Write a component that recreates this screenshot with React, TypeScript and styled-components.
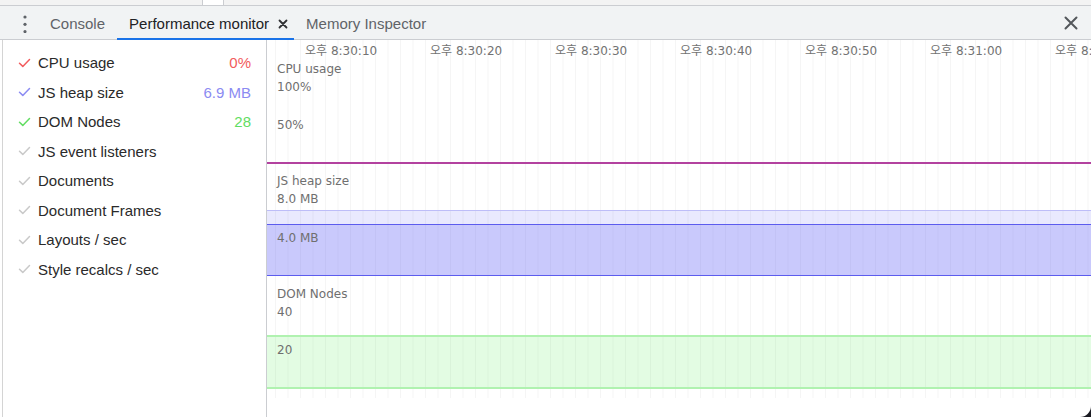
import React from 'react';
import styled, { createGlobalStyle } from 'styled-components';

const Global = createGlobalStyle`
  html, body { margin: 0; padding: 0; background: #1b1b22; }
  body { font-family: "Liberation Sans", Arial, sans-serif; }
`;

const Window = styled.div`
  width: 1091px;
  height: 417px;
  background: #fff;
  overflow: hidden;
  border-bottom-right-radius: 11px;
  display: flex;
  flex-direction: column;
`;

const TopStrip = styled.div`
  height: 5px;
  flex: none;
  background: #f3f3f3;
  border-bottom: 1px solid #cbcdd1;
  display: flex;
`;

const StripGap = styled.div`
  width: 202px;
`;

const StripCell = styled.div`
  width: 20px;
  background: #fff;
  border-left: 1px solid #cbcdd1;
  border-right: 1px solid #cbcdd1;
`;

const TabBar = styled.div`
  height: 33px;
  flex: none;
  background: #f1f3f4;
  border-bottom: 1px solid #cbcdd1;
  display: flex;
  align-items: stretch;
  padding: 0 13px 0 11px;
`;

const MenuButton = styled.div`
  width: 27px;
  display: flex;
  align-items: center;
  justify-content: center;
  color: #5f6368;
`;

const Tab = styled.div<{ $active?: boolean }>`
  display: flex;
  align-items: center;
  gap: 9px;
  padding: 1px ${p => (p.$active ? '6px' : '12px')} 0 12px;
  margin-bottom: -1px;
  font-size: 15px;
  white-space: nowrap;
  color: ${p => (p.$active ? '#202124' : '#5f6368')};
  box-shadow: ${p => (p.$active ? 'inset 0 -2px 0 #1a73e8' : 'none')};
`;

const Spacer = styled.div`
  flex: 1;
`;

const CloseButton = styled.div`
  display: flex;
  align-items: center;
  color: #5f6368;
`;

const Main = styled.div`
  flex: 1;
  display: flex;
  min-height: 0;
`;

const Sidebar = styled.div`
  width: 265px;
  margin-left: 2px;
  flex: none;
  box-sizing: border-box;
  border-left: 1px solid #d4d4d4;
  border-right: 1px solid #cbcdd1;
  padding-top: 8px;
  display: flex;
  flex-direction: column;
`;

const MetricRow = styled.div`
  height: 29.5px;
  display: flex;
  align-items: center;
  padding: 0 15px 0 15px;
  font-size: 15px;
  color: #2a2a2a;
`;

const Check = styled.svg<{ $color: string }>`
  width: 13px;
  height: 10px;
  flex: none;
  margin-right: 7px;
  stroke: ${p => p.$color};
`;

const MetricName = styled.span`
  flex: 1;
`;

const MetricValue = styled.span<{ $color: string }>`
  color: ${p => p.$color};
`;

const ChartArea = styled.div`
  flex: 1;
  min-width: 0;
  display: flex;
  flex-direction: column;
  font-family: "DejaVu Sans", "Noto Sans CJK KR", sans-serif;
  font-size: 12px;
  color: #6f6f6f;
`;

const Grid = styled.div`
  height: 358px;
  flex: none;
  display: flex;
  flex-direction: column;
  background-image: linear-gradient(to right, #f5f5f5 1px, transparent 1px);
  background-size: 12.5px 100%;
  background-position: 8px 0;
`;

const TimeAxis = styled.div`
  height: 17px;
  padding: 2px 0 0 38px;
  display: flex;
  white-space: nowrap;
  overflow: hidden;
  line-height: 18px;
  color: #727272;
`;

const TimeLabel = styled.span`
  width: 125px;
  flex: none;
`;

const Panel = styled.div<{ $pad: number }>`
  display: flex;
  flex-direction: column;
  padding-top: ${p => p.$pad}px;
`;

const Label = styled.div`
  height: 18px;
  line-height: 20px;
  padding-left: 10px;
  white-space: nowrap;
`;

const Gap = styled.div<{ $h: number }>`
  height: ${p => p.$h}px;
  flex: none;
`;

const Line = styled.div<{ $color: string; $w: number }>`
  height: ${p => p.$w}px;
  background: ${p => p.$color};
`;

const Band = styled.div<{ $fill: string; $h: number; $top?: string; $bottom?: string; $bw?: number }>`
  height: ${p => p.$h}px;
  box-sizing: border-box;
  background: ${p => p.$fill};
  border-top: ${p => (p.$top ? `${p.$bw ?? 1}px solid ${p.$top}` : 'none')};
  border-bottom: ${p => (p.$bottom ? `${p.$bw ?? 1}px solid ${p.$bottom}` : 'none')};
  padding-top: 3px;
`;

const CheckIcon = ({ color }: { color: string }) => (
  <Check $color={color} viewBox="0 0 13 10" fill="none" strokeWidth={1.5} strokeLinecap="round" strokeLinejoin="round">
    <path d="M1.5 5.2 L4.8 8.4 L11.5 1.5" />
  </Check>
);

const metrics = [
  { name: 'CPU usage', value: '0%', color: '#f25b5d', on: true },
  { name: 'JS heap size', value: '6.9 MB', color: '#8b8bf2', on: true },
  { name: 'DOM Nodes', value: '28', color: '#62dd62', on: true },
  { name: 'JS event listeners', on: false },
  { name: 'Documents', on: false },
  { name: 'Document Frames', on: false },
  { name: 'Layouts / sec', on: false },
  { name: 'Style recalcs / sec', on: false },
];

const times = ['8:30:10', '8:30:20', '8:30:30', '8:30:40', '8:30:50', '8:31:00', '8:31:10'];

export default function App() {
  return (
    <Window>
      <Global />
      <TopStrip>
        <StripGap />
        <StripCell />
      </TopStrip>
      <TabBar>
        <MenuButton>
          <svg width="6" height="20" viewBox="0 0 6 20" fill="currentColor">
            <circle cx="3" cy="4" r="1.6" />
            <circle cx="3" cy="11.3" r="1.6" />
            <circle cx="3" cy="18.6" r="1.6" />
          </svg>
        </MenuButton>
        <Tab>Console</Tab>
        <Tab $active>
          Performance monitor
          <svg width="10" height="10" viewBox="0 0 10 10" stroke="#303134" strokeWidth="1.8" strokeLinecap="round">
            <path d="M1.5 1.5 L8.5 8.5 M8.5 1.5 L1.5 8.5" />
          </svg>
        </Tab>
        <Tab>Memory Inspector</Tab>
        <Spacer />
        <CloseButton>
          <svg width="14" height="14" viewBox="0 0 14 14" stroke="#54575b" strokeWidth="2" strokeLinecap="round">
            <path d="M1.5 1.5 L12.5 12.5 M12.5 1.5 L1.5 12.5" />
          </svg>
        </CloseButton>
      </TabBar>
      <Main>
        <Sidebar>
          {metrics.map(m => (
            <MetricRow key={m.name}>
              <CheckIcon color={m.on ? (m.color as string) : '#c9c9c9'} />
              <MetricName>{m.name}</MetricName>
              {m.value && <MetricValue $color={m.color as string}>{m.value}</MetricValue>}
            </MetricRow>
          ))}
        </Sidebar>
        <ChartArea>
          <Grid>
            <TimeAxis>
              {times.map(t => (
                <TimeLabel key={t}>오후 {t}</TimeLabel>
              ))}
            </TimeAxis>
            <Panel $pad={0}>
              <Label>CPU usage</Label>
              <Label>100%</Label>
              <Gap $h={20} />
              <Label>50%</Label>
              <Gap $h={29} />
              <Line $color="#b3429f" $w={2} />
            </Panel>
            <Panel $pad={7}>
              <Label>JS heap size</Label>
              <Label>8.0 MB</Label>
              <Gap $h={3} />
              <Band $h={14} $fill="rgba(110,110,245,0.15)" $top="#bdbdf8" />
              <Band $h={52} $fill="rgba(100,100,245,0.35)" $top="#5c5cee" $bottom="#5c5cee">
                <Label>4.0 MB</Label>
              </Band>
            </Panel>
            <Panel $pad={8}>
              <Label>DOM Nodes</Label>
              <Label>40</Label>
              <Gap $h={15} />
              <Band $h={54} $bw={2} $fill="rgba(100,240,100,0.18)" $top="#b0f2b0" $bottom="#b0f2b0">
                <Label>20</Label>
              </Band>
            </Panel>
          </Grid>
        </ChartArea>
      </Main>
    </Window>
  );
}
